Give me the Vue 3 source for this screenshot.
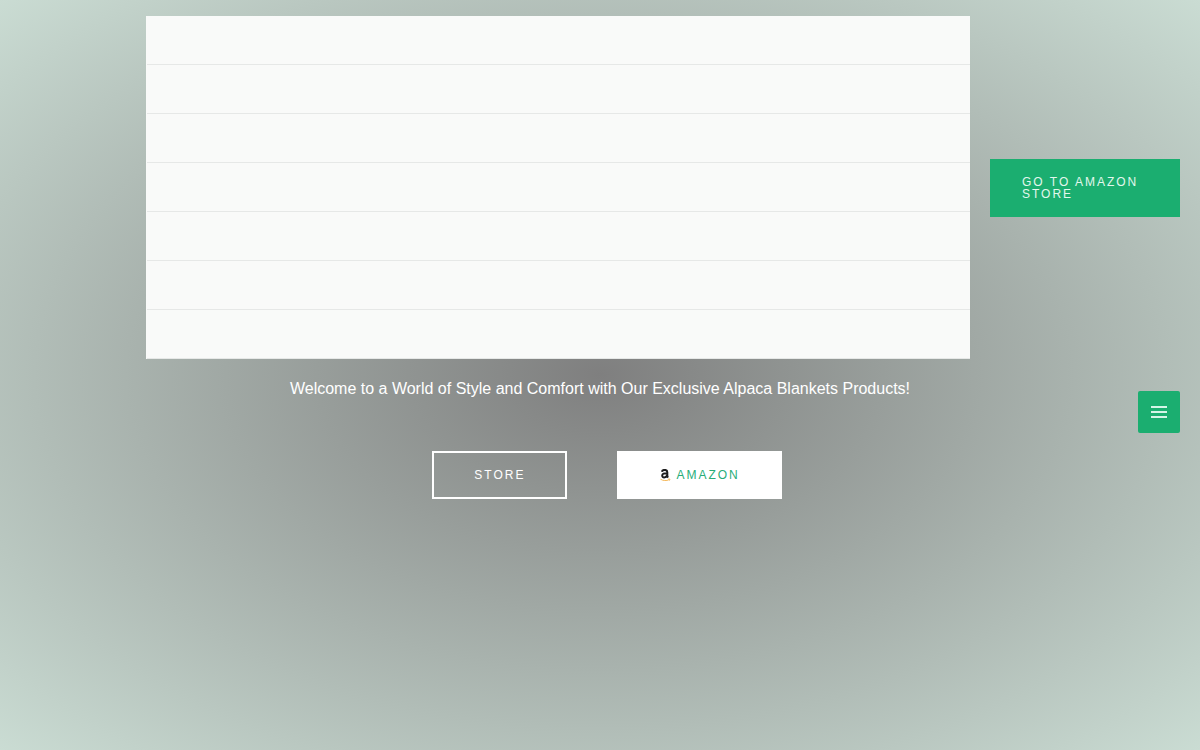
<script setup>
const menuRows = 7
</script>

<template>
  <div class="page">
    <header class="header">
      <nav class="menu" aria-label="Main">
        <ul class="menu-list">
          <li v-for="row in menuRows" :key="row" class="menu-row"></li>
        </ul>
      </nav>
      <a class="button button-green" href="#">GO TO AMAZON STORE</a>
    </header>

    <main class="hero">
      <p class="welcome">Welcome to a World of Style and Comfort with Our Exclusive Alpaca Blankets Products!</p>
      <div class="actions">
        <a class="button button-outline" href="#">STORE</a>
        <a class="button button-white" href="#">
          <svg class="amazon-icon" viewBox="0 0 12 12" aria-hidden="true">
            <path d="M2.9 2.8C3.2 1.2 4.4 0.9 5.7 0.9C7.5 0.9 8.3 1.7 8.3 3.2V6.6C8.3 7.5 8.6 8 9.1 8.6M8.2 4.2C4.9 4.1 3.2 4.8 3.2 6.6C3.2 9 6.9 9.1 8.1 6.4" fill="none" stroke="#1c1c1c" stroke-width="2" />
            <path d="M1.5 10.2C4.1 11.9 7.5 12 9.9 10.8M9.1 10.2L10.9 10L10.5 11.6" fill="none" stroke="#f5b95c" stroke-width="1" />
          </svg>
          <span>AMAZON</span>
        </a>
      </div>
    </main>

    <button class="toggle" type="button" aria-label="Toggle menu">
      <svg class="toggle-icon" viewBox="0 0 16 14" aria-hidden="true">
        <path d="M0 2H16M0 7H16M0 12H16" stroke="#d5f5e7" stroke-width="2" />
      </svg>
    </button>
  </div>
</template>

<style>
body {
  margin: 0;
}
</style>

<style scoped>
.page {
  position: relative;
  box-sizing: border-box;
  min-height: 100vh;
  background: radial-gradient(ellipse farthest-corner at center, #7f7f7f, #cadcd3);
  font-family: "Liberation Sans", Arial, sans-serif;
}

.header {
  display: flex;
  align-items: center;
  gap: 20px;
  padding: 16px 20px 16px 146px;
}

.menu {
  flex: 1;
  background: #f9faf9;
}

.menu-list {
  margin: 0;
  padding: 0 0 0 1px;
  list-style: none;
}

.menu-row {
  box-sizing: border-box;
  height: 49px;
  border-bottom: 1px solid #e6e8e7;
}

.button {
  display: flex;
  align-items: center;
  box-sizing: border-box;
  border: 2px solid #ffffff;
  padding: 16px 40px;
  font-size: 12px;
  line-height: 12px;
  letter-spacing: 2px;
  text-decoration: none;
}

.button-green {
  width: 190px;
  padding: 15px 30px;
  border-color: #1bae70;
  background: #1bae70;
  color: #e2f7ed;
}

.button-outline {
  color: #ffffff;
}

.button-white {
  gap: 5px;
  background: #ffffff;
  color: #27ad78;
}

.amazon-icon {
  width: 12px;
  height: 12px;
}

.hero {
  display: flex;
  flex-direction: column;
  align-items: center;
}

.welcome {
  margin: 0;
  color: #ffffff;
  font-size: 16px;
  line-height: 28px;
  text-align: center;
}

.actions {
  display: flex;
  gap: 50px;
  margin-top: 48px;
  padding-left: 14px;
}

.toggle {
  position: absolute;
  top: 391px;
  right: 20px;
  display: flex;
  align-items: center;
  justify-content: center;
  width: 42px;
  height: 42px;
  padding: 0;
  border: 0;
  border-radius: 2px;
  background: #1bae70;
}

.toggle-icon {
  width: 16px;
  height: 14px;
}
</style>
